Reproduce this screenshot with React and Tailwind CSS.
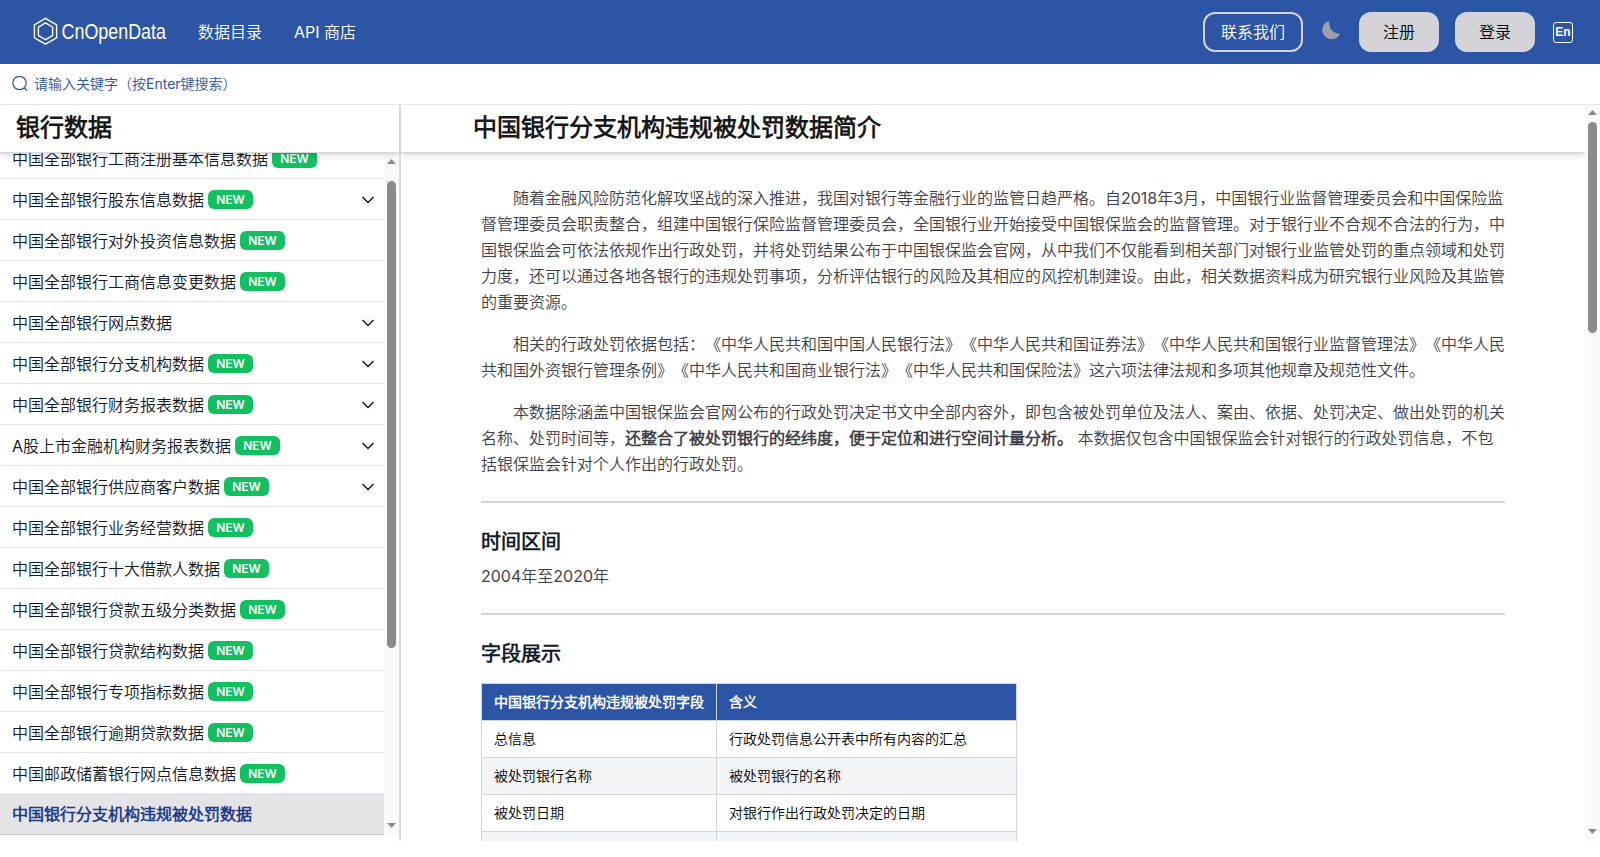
import React from "react";

const menu = [
  { label: "中国全部银行工商注册基本信息数据", isNew: true },
  { label: "中国全部银行股东信息数据", isNew: true, open: true },
  { label: "中国全部银行对外投资信息数据", isNew: true },
  { label: "中国全部银行工商信息变更数据", isNew: true },
  { label: "中国全部银行网点数据", open: true },
  { label: "中国全部银行分支机构数据", isNew: true, open: true },
  { label: "中国全部银行财务报表数据", isNew: true, open: true },
  { label: "A股上市金融机构财务报表数据", isNew: true, open: true },
  { label: "中国全部银行供应商客户数据", isNew: true, open: true },
  { label: "中国全部银行业务经营数据", isNew: true },
  { label: "中国全部银行十大借款人数据", isNew: true },
  { label: "中国全部银行贷款五级分类数据", isNew: true },
  { label: "中国全部银行贷款结构数据", isNew: true },
  { label: "中国全部银行专项指标数据", isNew: true },
  { label: "中国全部银行逾期贷款数据", isNew: true },
  { label: "中国邮政储蓄银行网点信息数据", isNew: true },
  { label: "中国银行分支机构违规被处罚数据", active: true },
];

const fields = [
  ["总信息", "行政处罚信息公开表中所有内容的汇总"],
  ["被处罚银行名称", "被处罚银行的名称"],
  ["被处罚日期", "对银行作出行政处罚决定的日期"],
  ["", ""],
];

function Logo() {
  return (
    <svg viewBox="0 0 136 32" className="h-8 w-[136px]" fill="none" stroke="white">
      <path d="M13.5 2.4 L24.6 8.8 V21.8 L13.5 28.2 L2.4 21.8 V8.8 Z" strokeWidth="1.4" />
      <path d="M13.5 6.9 L20.6 11.1 V19.5 L13.5 23.7 L6.4 19.5 V11.1 Z" strokeWidth="1.4" />
      <text
        x="29.5"
        y="23"
        fill="white"
        stroke="none"
        fontSize="21.5"
        textLength="104.5"
        lengthAdjust="spacingAndGlyphs"
        fontFamily="Liberation Sans, sans-serif"
      >
        CnOpenData
      </text>
    </svg>
  );
}

function Arrow({ down }) {
  return (
    <svg viewBox="0 0 9 5" className="h-[5px] w-[9px] shrink-0" fill="#8b8b8b">
      {down ? <path d="M0 0H9L4.5 5Z" /> : <path d="M0 5H9L4.5 0Z" />}
    </svg>
  );
}

export default function App() {
  return (
    <div className="flex h-[841px] w-[1600px] flex-col overflow-hidden bg-white font-['Inter','Noto_Sans_CJK_SC_DemiLight','Noto_Sans_CJK_SC',sans-serif] text-base text-gray-900 [text-spacing-trim:space-all]">
      <header className="flex h-16 shrink-0 items-center bg-[#2d55a5] pr-[27px] pl-8 text-white">
        <Logo />
        <a className="ml-[30px]">数据目录</a>
        <a className="ml-8">API 商店</a>
        <div className="ml-auto flex items-center">
          <button className="h-10 w-[100px] rounded-xl border-2 border-zinc-300">联系我们</button>
          <svg viewBox="0 0 18 18" className="mx-[19px] mb-1 h-[18px] w-[18px] overflow-visible text-zinc-400" fill="currentColor">
            <path d="M7.3 0C6.5 7 10.5 12.8 18 12.4A9.2 9.2 0 1 1 7.3 0Z" />
          </svg>
          <button className="h-10 w-20 rounded-xl bg-zinc-300 text-black">注册</button>
          <button className="ml-4 h-10 w-20 rounded-xl bg-zinc-300 text-black">登录</button>
          <span className="ml-[18px] flex h-[21px] w-5 items-center justify-center rounded-[3px] border-[1.5px] border-white font-['Liberation_Sans',sans-serif] text-xs leading-none font-bold">
            En
          </span>
        </div>
      </header>
      <div className="flex h-10 shrink-0 items-center pl-3 text-sm text-[#2d55a5]">
        <svg viewBox="0 0 16 16" className="mr-1.5 h-4 w-4" fill="none" stroke="currentColor" strokeWidth="1.2">
          <circle cx="7.5" cy="7" r="6.7" />
          <path d="M12.3 12L15 14.7" />
        </svg>
        请输入关键字（按Enter键搜索）
      </div>
      <div className="flex min-h-0 flex-1 border-t border-gray-200">
        <aside className="flex w-[401px] shrink-0 flex-col border-r-2 border-[#dadada]">
          <h2 className="z-10 h-12 shrink-0 border-b border-[#d8d8d8] pl-4 text-2xl leading-[46px] font-semibold text-[#171717] shadow-md">
            银行数据
          </h2>
          <div className="flex h-[682px]">
            <ul className="flex w-96 flex-col justify-end overflow-hidden">
              {menu.map((m) => (
                <li
                  key={m.label}
                  className={
                    m.active
                      ? "flex h-[41px] shrink-0 items-center border-b border-[#c4c4c8] bg-[#e4e4e7] px-3 font-semibold text-[#1e3a8a]"
                      : "flex h-[41px] shrink-0 items-center border-b border-gray-200 px-3 pt-px"
                  }
                >
                  {m.label}
                  {m.isNew && (
                    <span className="ml-1 flex h-[19px] w-[45px] items-center justify-center rounded-md bg-[#13c060] text-xs font-semibold text-white">
                      NEW
                    </span>
                  )}
                  {m.open && (
                    <svg viewBox="0 0 12 8" className="mr-[-2px] ml-auto h-2 w-3" fill="none" stroke="#111827" strokeWidth="1.5">
                      <path d="M0.5 1L6 6.5L11.5 1" />
                    </svg>
                  )}
                </li>
              ))}
            </ul>
            <div className="flex w-[15px] flex-col items-center bg-[#fafafa] pt-[6px] pb-[7px]">
              <Arrow />
              <div className="mt-[17px] h-[467px] w-[9px] rounded-full bg-[#8b8b8b]" />
              <div className="mt-auto flex">
                <Arrow down />
              </div>
            </div>
          </div>
        </aside>
        <main className="flex min-w-0 flex-1">
          <div className="flex w-[1184px] flex-col overflow-hidden">
            <h1 className="z-10 h-12 shrink-0 border-b border-[#d8d8d8] pl-[72px] text-2xl leading-[46px] font-semibold text-[#171717] shadow-md">
              中国银行分支机构违规被处罚数据简介
            </h1>
            <article className="ml-20 w-[1024px] pt-8 leading-[26px] text-zinc-700">
              <p className="mb-4 indent-8">
                随着金融风险防范化解攻坚战的深入推进，我国对银行等金融行业的监管日趋严格。自2018年3月，中国银行业监督管理委员会和中国保险监督管理委员会职责整合，组建中国银行保险监督管理委员会，全国银行业开始接受中国银保监会的监督管理。对于银行业不合规不合法的行为，中国银保监会可依法依规作出行政处罚，并将处罚结果公布于中国银保监会官网，从中我们不仅能看到相关部门对银行业监管处罚的重点领域和处罚力度，还可以通过各地各银行的违规处罚事项，分析评估银行的风险及其相应的风控机制建设。由此，相关数据资料成为研究银行业风险及其监管的重要资源。
              </p>
              <p className="mb-4 indent-8">
                相关的行政处罚依据包括：《中华人民共和国中国人民银行法》《中华人民共和国证券法》《中华人民共和国银行业监督管理法》《中华人民共和国外资银行管理条例》《中华人民共和国商业银行法》《中华人民共和国保险法》这六项法律法规和多项其他规章及规范性文件。
              </p>
              <p className="indent-8">
                本数据除涵盖中国银保监会官网公布的行政处罚决定书文中全部内容外，即包含被处罚单位及法人、案由、依据、处罚决定、做出处罚的机关名称、处罚时间等，
                <strong className="font-semibold">还整合了被处罚银行的经纬度，便于定位和进行空间计量分析。</strong>
                {" "}本数据仅包含中国银保监会针对银行的行政处罚信息，不包括银保监会针对个人作出的行政处罚。
              </p>
              <hr className="mt-6 border-t-2 border-zinc-300" />
              <h3 className="mt-[25px] text-xl leading-7 font-semibold text-gray-900">时间区间</h3>
              <p className="mt-[7px]">2004年至2020年</p>
              <hr className="mt-6 border-t-2 border-zinc-300" />
              <h3 className="mt-[25px] text-xl leading-7 font-semibold text-gray-900">字段展示</h3>
              <table className="mt-[15px] w-[536px] border-collapse text-left text-sm leading-5 text-black">
                <thead>
                  <tr className="h-[37px] bg-[#2d55a5] text-white">
                    <th className="w-[235px] border border-gray-300 px-3 font-semibold whitespace-nowrap">中国银行分支机构违规被处罚字段</th>
                    <th className="border border-gray-300 px-3 font-semibold">含义</th>
                  </tr>
                </thead>
                <tbody>
                  {fields.map(([a, b]) => (
                    <tr key={a} className="h-[37px] even:bg-gray-100">
                      <td className="border border-gray-300 px-3">{a}</td>
                      <td className="border border-gray-300 px-3">{b}</td>
                    </tr>
                  ))}
                </tbody>
              </table>
            </article>
          </div>
          <div className="flex w-[15px] flex-col items-center bg-[#fafafa] pt-[5px] pb-[7px]">
            <Arrow />
            <div className="mt-[7px] h-[211px] w-[9px] rounded-full bg-[#8b8b8b]" />
            <div className="mt-auto flex">
              <Arrow down />
            </div>
          </div>
        </main>
      </div>
    </div>
  );
}
